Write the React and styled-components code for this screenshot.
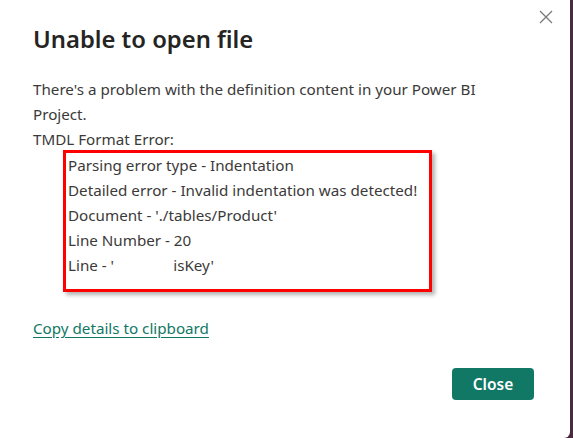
import React from "react";
import styled, { createGlobalStyle } from "styled-components";

const Global = createGlobalStyle`
  html, body { margin: 0; padding: 0; }
  body {
    background: #4a2a3e;
    font-family: "Noto Sans", "Open Sans", sans-serif;
    width: 573px;
    height: 438px;
    overflow: hidden;
  }
`;

const Dialog = styled.div`
  position: relative;
  width: 570px;
  height: 438px;
  background: #ffffff;
  border-radius: 0 0 6px 0;
  box-sizing: border-box;
  padding: 23px 0 0 33px;
  display: flex;
  flex-direction: column;
  color: #252423;
`;

const CloseX = styled.button`
  position: absolute;
  top: 5px;
  right: 12px;
  width: 24px;
  height: 24px;
  border: 0;
  padding: 0;
  background: transparent;
  display: flex;
  align-items: center;
  justify-content: center;
`;

const Title = styled.h1`
  margin: 0;
  font-size: 23.8px;
  line-height: 32px;
  font-weight: 600;
  color: #252423;
`;

const Body = styled.div`
  margin-top: 22px;
  font-size: 15.2px;
  line-height: 25px;
  color: #3b3a39;
  width: 480px;
`;

const Para = styled.p`
  margin: 0;
`;

const DetailBox = styled.div`
  margin: -2px 0 0 30px;
  width: 369px;
  height: 142px;
  box-sizing: border-box;
  border: 3px solid #ff0000;
  box-shadow: 3px 3px 4px rgba(0, 0, 0, 0.3);
  padding: 0 0 0 2px;
`;

const DetailLine = styled.div`
  white-space: pre;
  line-height: 25px;
`;

const Link = styled.a`
  margin-top: 24px;
  align-self: flex-start;
  font-size: 15.2px;
  line-height: 24px;
  color: #117865;
  text-decoration: underline;
  text-underline-offset: 3px;
  cursor: pointer;
`;

const Footer = styled.div`
  display: flex;
  justify-content: flex-end;
  padding-right: 36px;
  margin-top: 28px;
`;

const Button = styled.button`
  width: 82px;
  height: 32px;
  border: 0;
  border-radius: 4px;
  background: #117865;
  color: #ffffff;
  font-family: inherit;
  font-size: 15.5px;
  font-weight: 600;
  cursor: pointer;
`;

export default function App() {
  const details = [
    "Parsing error type - Indentation",
    "Detailed error - Invalid indentation was detected!",
    "Document - './tables/Product'",
    "Line Number - 20",
    "Line - '               isKey'",
  ];
  return (
    <>
      <Global />
      <Dialog>
        <CloseX aria-label="Close">
          <svg width="16" height="16" viewBox="0 0 16 16">
            <path d="M2 2 L14 14 M14 2 L2 14" stroke="#7a7a7a" strokeWidth="1.3" fill="none" />
          </svg>
        </CloseX>
        <Title>Unable to open file</Title>
        <Body>
          <Para>There's a problem with the definition content in your Power BI Project.</Para>
          <Para>TMDL Format Error:</Para>
          <DetailBox>
            {details.map((d) => (
              <DetailLine key={d}>{d}</DetailLine>
            ))}
          </DetailBox>
        </Body>
        <Link>Copy details to clipboard</Link>
        <Footer>
          <Button>Close</Button>
        </Footer>
      </Dialog>
    </>
  );
}
